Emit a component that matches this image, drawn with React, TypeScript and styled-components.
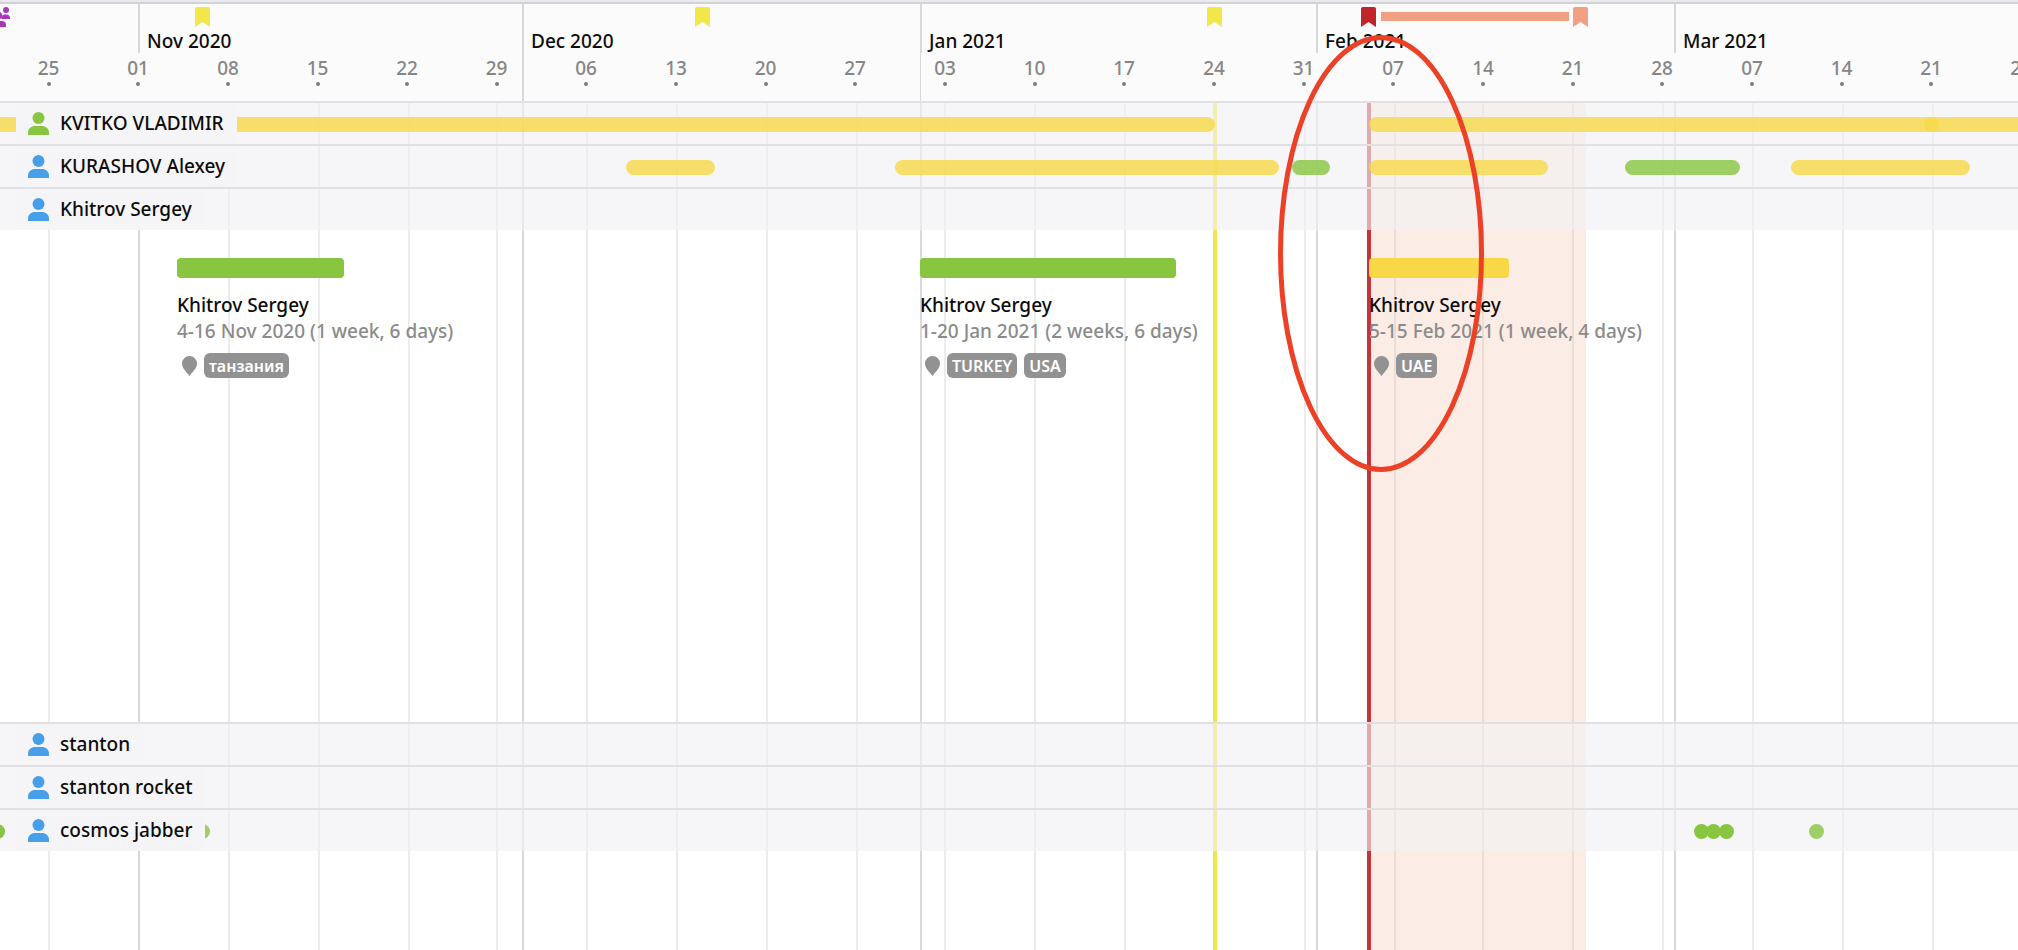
import React from "react";
import styled, { createGlobalStyle } from "styled-components";

const GlobalStyle = createGlobalStyle`
  * { box-sizing: border-box; }
  body {
    margin: 0;
    background: #fff;
    color: #0c0c0c;
    font-family: "Noto Sans", "Open Sans", sans-serif;
    font-size: 19px;
    font-weight: 500;
    line-height: 26px;
    overflow-x: hidden;
  }
`;

/* Time scale: day 0 is 25 October 2020. */
const ORIGIN = 48.42;
const DAY = 12.80714;
const WEEK = 7;
const scaleX = (day: number) => Math.round(ORIGIN + day * DAY);
const lineX = (day: number) => Math.round((ORIGIN + day * DAY) / 2) * 2;
const dayX = (day: number) => Math.round(ORIGIN + 1 + day * DAY);
const spanW = (from: number, to: number) => dayX(to) - dayX(from);

const GREEN = "#88c540";
const YELLOW = "#f8d847";
const BLUE = "#489fe9";
const LEMON = "#f3e64b";
const RED = "#c02528";
const SALMON = "#f2a083";

const weeks = [
  "25", "01", "08", "15", "22", "29", "06", "13", "20", "27", "03", "10",
  "17", "24", "31", "07", "14", "21", "28", "07", "14", "21", "28",
];

type Rule = "short" | "thin" | "full";
type Month = { label: string; day: number; days: number; rule: Rule };
const months: Month[] = [
  { label: "Nov 2020", day: 7, days: 30, rule: "short" },
  { label: "Dec 2020", day: 37, days: 31, rule: "full" },
  { label: "Jan 2021", day: 68, days: 31, rule: "thin" },
  { label: "Feb 2021", day: 99, days: 28, rule: "short" },
  { label: "Mar 2021", day: 127, days: 31, rule: "short" },
];
const lineSpan = (day: number, days: number) => lineX(day + days) - lineX(day);

const flags = [
  { day: 12, color: LEMON },
  { day: 51, color: LEMON },
  { day: 91, color: LEMON },
  { day: 103, color: RED },
  { day: 119.6, color: SALMON },
];

type Span = { from: number; to: number; color: string };
type Dot = { day: number; color: string; solid?: boolean };
type Card = Span & { name: string; dates: string; places: string[] };
type Person = { name: string; color: string; spans?: Span[]; dots?: Dot[]; cards?: Card[] };

const people: Person[] = [
  {
    name: "KVITKO VLADIMIR",
    color: GREEN,
    spans: [
      { from: -5, to: 91, color: YELLOW },
      { from: 103, to: 175, color: YELLOW },
    ],
    dots: [{ day: 147, color: YELLOW }],
  },
  {
    name: "KURASHOV Alexey",
    color: BLUE,
    spans: [
      { from: 45, to: 52, color: YELLOW },
      { from: 66, to: 96, color: YELLOW },
      { from: 97, to: 100, color: GREEN },
      { from: 103, to: 117, color: YELLOW },
      { from: 123, to: 132, color: GREEN },
      { from: 136, to: 150, color: YELLOW },
    ],
  },
  {
    name: "Khitrov Sergey",
    color: BLUE,
    cards: [
      { from: 10, to: 23, color: GREEN, name: "Khitrov Sergey", dates: "4-16 Nov 2020 (1 week, 6 days)", places: ["танзания"] },
      { from: 68, to: 88, color: GREEN, name: "Khitrov Sergey", dates: "1-20 Jan 2021 (2 weeks, 6 days)", places: ["TURKEY", "USA"] },
      { from: 103, to: 114, color: YELLOW, name: "Khitrov Sergey", dates: "5-15 Feb 2021 (1 week, 4 days)", places: ["UAE"] },
    ],
  },
  { name: "stanton", color: BLUE },
  { name: "stanton rocket", color: BLUE },
  {
    name: "cosmos jabber",
    color: BLUE,
    dots: [
      { day: -4, color: GREEN, solid: true },
      { day: 12, color: GREEN },
      { day: 129, color: GREEN, solid: true },
      { day: 130, color: GREEN, solid: true },
      { day: 131, color: GREEN, solid: true },
      { day: 138, color: GREEN },
    ],
  },
];

const Page = styled.main`
  position: relative;
  display: flex;
  flex-direction: column;
  min-height: 100vh;
  overflow: hidden;
  border-top: 2px solid #e9e9f0;
`;

const Header = styled.header`
  position: relative;
  display: flex;
  flex-direction: column;
  flex: none;
  height: 101px;
  border-top: 2px solid #d3d3d6;
  border-bottom: 2px solid #e1e1e3;
  background: #fbfbfc;
`;

const ScaleRow = styled.div`
  display: flex;
`;

const MonthMark = styled.div<{ $rule: Rule }>`
  display: flex;
  flex-direction: column;
  flex: none;
  height: 49px;
  padding: 24px 0 0 7px;
  border-left: 2px solid #d8d8d9;
  white-space: nowrap;
  &::after {
    content: "";
    display: ${(p) => (p.$rule === "short" ? "none" : "block")};
    flex: none;
    height: 48px;
    margin-top: -1px;
    margin-left: -9px;
    border-left: ${(p) => (p.$rule === "thin" ? 1 : 2)}px solid #d8d8d9;
  }
`;

const WeekMark = styled.div`
  display: flex;
  flex-direction: column;
  align-items: center;
  flex: none;
  padding-top: 2px;
  color: #868686;
  &::after {
    content: "";
    width: 4px;
    height: 4px;
    margin-top: 1px;
    border-radius: 50%;
    background: #7c7c7c;
  }
`;

const FlagIcon = styled.svg`
  position: absolute;
  top: 3px;
  width: 15px;
  height: 20px;
  margin-left: -8px;
`;

const GroupIcon = styled.svg`
  position: absolute;
  top: 3px;
  left: -14px;
  width: 24px;
  height: 20px;
`;

const RangeBar = styled.div`
  position: absolute;
  top: 8px;
  height: 9px;
  background: ${SALMON};
`;

const Body = styled.section`
  display: grid;
  flex: 1;
  grid-template: 1fr / minmax(0, 1fr);
`;

const Backdrop = styled.div`
  position: relative;
  display: grid;
  grid-area: 1 / 1;
  overflow: hidden;
`;

const GridLayer = styled.div`
  display: flex;
  grid-area: 1 / 1;
`;

const GridColumn = styled.div<{ $month?: boolean }>`
  flex: none;
  border-left: 2px solid ${(p) => (p.$month ? "#d9d9d9" : "#ececec")};
`;

const Spacer = styled.div`
  flex: none;
`;

const RangeShade = styled.div`
  position: absolute;
  top: 0;
  bottom: 0;
  background: rgba(235, 150, 110, 0.18);
`;

const EventLine = styled.div<{ $color: string }>`
  position: absolute;
  top: 0;
  bottom: 0;
  width: 4px;
  margin-left: -2px;
  background: ${(p) => p.$color};
`;

const Lanes = styled.ul`
  position: relative;
  grid-area: 1 / 1;
  margin: 0;
  padding: 0;
  list-style: none;
`;

const Lane = styled.li`
  & + & {
    border-top: 2px solid #e1e1e3;
  }
`;

const LaneHead = styled.div`
  position: relative;
  height: 41px;
  background: rgba(240, 240, 244, 0.62);
`;

const PersonLabel = styled.div`
  position: relative;
  display: flex;
  align-items: center;
  gap: 11px;
  width: max-content;
  height: 100%;
  margin-left: 16px;
  padding: 0 13px 0 12px;
  background: #f5f5f7;
`;

const PersonName = styled.span`
  padding-bottom: 1px;
`;

const PersonIcon = styled.svg`
  display: block;
  width: 21px;
  height: 23px;
`;

const SpanBar = styled.div<{ $color: string }>`
  position: absolute;
  top: 14px;
  height: 15px;
  border-radius: 8px;
  background: ${(p) => p.$color};
  opacity: 0.8;
`;

const DayDot = styled.div<{ $color: string; $solid?: boolean }>`
  position: absolute;
  top: 14px;
  width: 15px;
  height: 15px;
  margin-left: -8px;
  border-radius: 50%;
  background: ${(p) => p.$color};
  opacity: ${(p) => (p.$solid ? 1 : 0.8)};
`;

const CardArea = styled.div`
  position: relative;
  min-height: 492px;
`;

const CardBox = styled.article`
  position: absolute;
  top: 28px;
  white-space: nowrap;
`;

const CardBar = styled.div<{ $color: string }>`
  height: 20px;
  margin-bottom: 14px;
  border-radius: 4px;
  background: ${(p) => p.$color};
`;

const CardDates = styled.div`
  color: #8b8b8b;
`;

const Places = styled.div`
  display: flex;
  align-items: center;
  gap: 7px;
  margin-top: 9px;
  padding-left: 5px;
`;

const PinIcon = styled.svg`
  width: 15px;
  height: 20px;
`;

const Tag = styled.span`
  height: 25px;
  padding: 0 5px;
  border-radius: 6px;
  background: #929292;
  color: #fff;
  font-size: 16px;
  font-weight: 600;
  line-height: 26px;
`;

const Annotation = styled.svg`
  position: absolute;
  top: 33px;
  left: 1278px;
  width: 206px;
  height: 437px;
  pointer-events: none;
`;

function Avatar({ color }: { color: string }) {
  return (
    <PersonIcon viewBox="0 0 21 23" fill={color} aria-hidden="true">
      <circle cx="10.5" cy="6" r="6" />
      <path d="M0 23v-2.5C0 16.500 3.500 14 7 14h7c3.500 0 7 2.500 7 6.500V23z" />
    </PersonIcon>
  );
}

function TimelineHeader() {
  const half = WEEK / 2;
  return (
    <Header>
      <ScaleRow>
        <Spacer style={{ width: lineX(months[0].day) }} />
        {months.map((m) => (
          <MonthMark key={m.label} $rule={m.rule} style={{ width: lineSpan(m.day, m.days) }}>
            {m.label}
          </MonthMark>
        ))}
      </ScaleRow>
      <ScaleRow>
        <Spacer style={{ width: scaleX(-half) }} />
        {weeks.map((w, i) => (
          <WeekMark key={i} style={{ width: scaleX(i * WEEK + half) - scaleX(i * WEEK - half) }}>
            {w}
          </WeekMark>
        ))}
      </ScaleRow>
      <GroupIcon viewBox="0 0 24 20" fill="#ab36bd" aria-hidden="true">
        <circle cx="20" cy="3" r="3" />
        <path d="M15.500 12V10.500a3.500 3.500 0 0 1 3.500-3h2a3.500 3.500 0 0 1 3 3V12z" />
        <circle cx="4" cy="3" r="3" />
        <path d="M0 12v-1.500a3.500 3.500 0 0 1 3-3h2a3.500 3.500 0 0 1 3.500 3V12z" />
        <circle cx="12.500" cy="8.500" r="3.700" />
        <path d="M5 20v-2c0-2.500 2-4 4-4h7c2.500 0 4 1.500 4 4v2z" />
      </GroupIcon>
      {flags.map((f) => (
        <FlagIcon key={f.day} viewBox="0 0 15 20" fill={f.color} style={{ left: dayX(f.day) }} aria-hidden="true">
          <path d="M0 2C0 .7.7 0 2 0h11c1.300 0 2 .7 2 2v18l-7.500-5L0 20z" />
        </FlagIcon>
      ))}
      <RangeBar style={{ left: dayX(103) + 12, width: spanW(103, 119.6) - 24 }} />
    </Header>
  );
}

function PersonLane({ person }: { person: Person }) {
  return (
    <Lane>
      <LaneHead>
        {person.spans?.map((s) => (
          <SpanBar key={s.from} $color={s.color} style={{ left: dayX(s.from), width: spanW(s.from, s.to) }} />
        ))}
        {person.dots?.map((d) => (
          <DayDot key={d.day} $color={d.color} $solid={d.solid} style={{ left: dayX(d.day) }} />
        ))}
        <PersonLabel>
          <Avatar color={person.color} />
          <PersonName>{person.name}</PersonName>
        </PersonLabel>
      </LaneHead>
      {person.cards && (
        <CardArea>
          {person.cards.map((c) => (
            <CardBox key={c.from} style={{ left: dayX(c.from) }}>
              <CardBar $color={c.color} style={{ width: spanW(c.from, c.to) }} />
              <div>{c.name}</div>
              <CardDates>{c.dates}</CardDates>
              <Places>
                <PinIcon viewBox="0 0 15 20" fill="#929292" aria-hidden="true">
                  <path d="M7.500 0A7.500 7.500 0 0 0 0 7.500C0 12 4 15.500 7.500 20 11 15.500 15 12 15 7.500A7.500 7.500 0 0 0 7.500 0z" />
                </PinIcon>
                {c.places.map((p) => (
                  <Tag key={p}>{p}</Tag>
                ))}
              </Places>
            </CardBox>
          ))}
        </CardArea>
      )}
    </Lane>
  );
}

export default function App() {
  return (
    <Page>
      <GlobalStyle />
      <TimelineHeader />
      <Body>
        <Backdrop>
          <GridLayer>
            <Spacer style={{ width: lineX(0) }} />
            {weeks.map((_, i) => (
              <GridColumn key={i} style={{ width: lineSpan(i * WEEK, WEEK) }} />
            ))}
          </GridLayer>
          <GridLayer>
            <Spacer style={{ width: lineX(months[0].day) }} />
            {months.map((m) => (
              <GridColumn key={m.label} $month style={{ width: lineSpan(m.day, m.days) }} />
            ))}
          </GridLayer>
          <RangeShade style={{ left: dayX(103), width: spanW(103, 120) }} />
          <EventLine $color={LEMON} style={{ left: dayX(91) }} />
          <EventLine $color="#c8323a" style={{ left: dayX(103) }} />
        </Backdrop>
        <Lanes>
          {people.map((p) => (
            <PersonLane key={p.name} person={p} />
          ))}
        </Lanes>
      </Body>
      <Annotation viewBox="0 0 206 437" fill="none" stroke="#ec4126" strokeWidth="5" aria-hidden="true">
        <ellipse cx="103" cy="218.500" rx="100.500" ry="216" />
      </Annotation>
    </Page>
  );
}
